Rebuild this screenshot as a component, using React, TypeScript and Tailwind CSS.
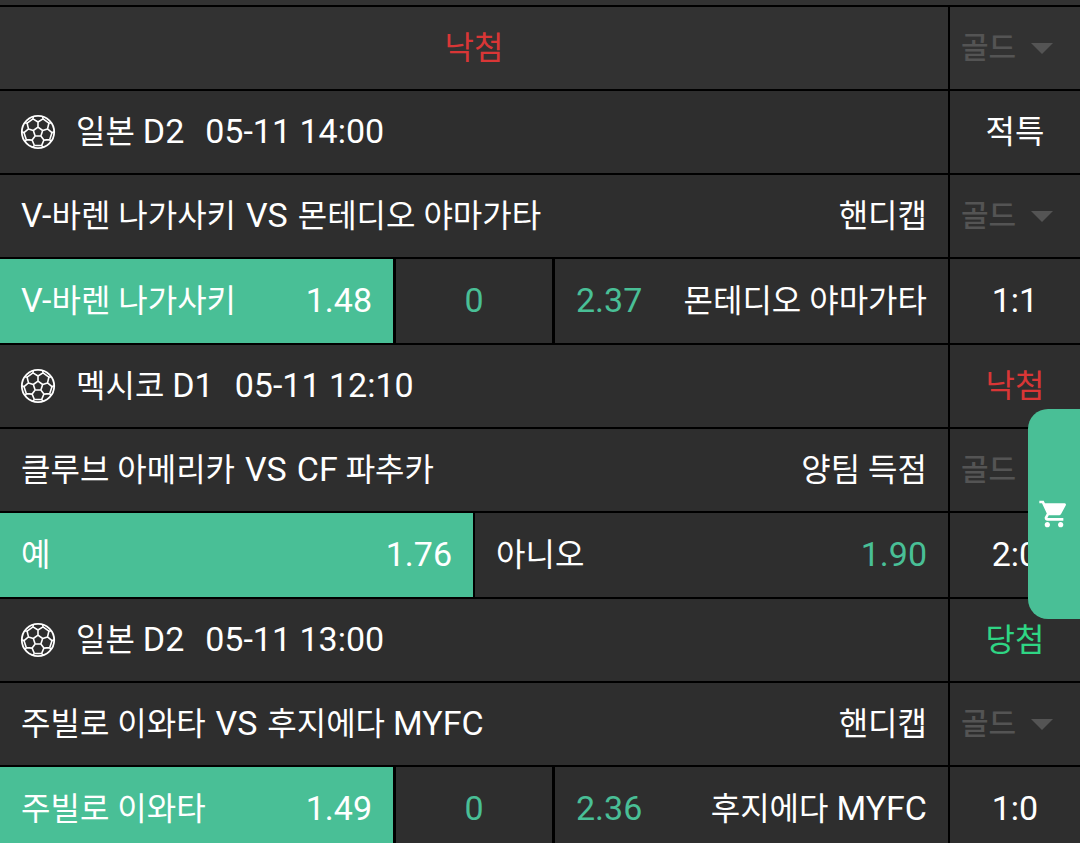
import type { ReactNode } from "react";
import { MdShoppingCart } from "react-icons/md";

type Outcome = "hit" | "miss" | "void";

interface Match {
  id: string;
  league: string;
  time: string;
  outcome: Outcome;
  home: string;
  away: string;
  market: string;
  score: string;
  kind: "handicap" | "binary";
  left: { label: string; odds: string };
  line?: string;
  right: { label: string; odds: string };
}

const matches: Match[] = [
  {
    id: "m1",
    league: "일본 D2",
    time: "05-11 14:00",
    outcome: "void",
    home: "V-바렌 나가사키",
    away: "몬테디오 야마가타",
    market: "핸디캡",
    score: "1:1",
    kind: "handicap",
    left: { label: "V-바렌 나가사키", odds: "1.48" },
    line: "0",
    right: { label: "몬테디오 야마가타", odds: "2.37" },
  },
  {
    id: "m2",
    league: "멕시코 D1",
    time: "05-11 12:10",
    outcome: "miss",
    home: "클루브 아메리카",
    away: "CF 파추카",
    market: "양팀 득점",
    score: "2:0",
    kind: "binary",
    left: { label: "예", odds: "1.76" },
    right: { label: "아니오", odds: "1.90" },
  },
  {
    id: "m3",
    league: "일본 D2",
    time: "05-11 13:00",
    outcome: "hit",
    home: "주빌로 이와타",
    away: "후지에다 MYFC",
    market: "핸디캡",
    score: "1:0",
    kind: "handicap",
    left: { label: "주빌로 이와타", odds: "1.49" },
    line: "0",
    right: { label: "후지에다 MYFC", odds: "2.36" },
  },
];

const outcomes: Record<Outcome, { text: string; color: string }> = {
  void: { text: "적특", color: "text-white" },
  miss: { text: "낙첨", color: "text-[#d93636]" },
  hit: { text: "당첨", color: "text-[#2fd584]" },
};

// Latin letters and digits run slightly larger than Hangul so both look the same height.
function Mixed({ children }: { children: string }) {
  return (
    <>
      {children.split(/([!-~]+(?: [!-~]+)*)/).map((part, i) =>
        i % 2 ? (
          <span key={i} className="text-[34px] leading-none">
            {part}
          </span>
        ) : (
          part
        ),
      )}
    </>
  );
}

// Point on the ball, angle measured clockwise from the top.
const at = (r: number, deg: number) => {
  const a = (deg * Math.PI) / 180;
  return `${(18 + r * Math.sin(a)).toFixed(2)} ${(18 - r * Math.cos(a)).toFixed(2)}`;
};

const seams = [0, 72, 144, 216, 288]
  .map(
    (d) =>
      `M${at(4.9, d)}L${at(4.9, d + 72)}M${at(4.9, d)}L${at(10, d)}` +
      `M${at(14, d - 21)}L${at(10, d)}L${at(14, d + 21)}L${at(14, d + 51)}` +
      `M${at(14, d + 21)}L${at(16.2, d + 17)}M${at(14, d - 21)}L${at(16.2, d - 17)}`,
  )
  .join("");

function SoccerBall() {
  return (
    <svg viewBox="0 0 36 36" className="size-9 shrink-0" fill="none" stroke="white" aria-hidden="true">
      <circle cx="18" cy="18" r="16.2" strokeWidth="1.8" />
      <path d={seams} strokeWidth="1.6" strokeLinejoin="round" />
    </svg>
  );
}

function Row({ tall, main, side }: { tall?: boolean; main: ReactNode; side: ReactNode }) {
  return (
    <div className={`flex gap-0.5 ${tall ? "h-[84px]" : "h-[82px]"}`}>
      <div className="flex min-w-0 flex-1">{main}</div>
      <div className="flex w-[130px] shrink-0 items-center justify-center bg-[#2e2e2e]">{side}</div>
    </div>
  );
}

function GoldSelect({ label }: { label: string }) {
  return (
    <div className="flex w-full items-center justify-between pr-[26px] pl-[11px]">
      <select
        aria-label={label}
        disabled
        className="w-15 appearance-none bg-transparent text-3xl leading-10 font-medium text-[#545454] opacity-100"
      >
        <option>골드</option>
      </select>
      <svg viewBox="0 0 24 12" className="h-3 w-6" fill="#545454" aria-hidden="true">
        <path d="M1 1h22L12 12z" />
      </svg>
    </div>
  );
}

const cell = "flex min-w-0 items-center justify-between px-[21px] whitespace-nowrap";

function Bets({ match }: { match: Match }) {
  if (match.kind === "binary") {
    return (
      <div className="grid flex-1 grid-cols-2 gap-0.5">
        <button type="button" aria-pressed="true" className={`${cell} bg-[#49bf96]`}>
          <span>{match.left.label}</span>
          <span>
            <Mixed>{match.left.odds}</Mixed>
          </span>
        </button>
        <button type="button" aria-pressed="false" className={`${cell} bg-[#2e2e2e]`}>
          <span>{match.right.label}</span>
          <span className="text-[#49bf96]">
            <Mixed>{match.right.odds}</Mixed>
          </span>
        </button>
      </div>
    );
  }
  return (
    <div className="grid flex-1 grid-cols-[1fr_156px_1fr] gap-[3px]">
      <button type="button" aria-pressed="true" className={`${cell} bg-[#49bf96]`}>
        <span>
          <Mixed>{match.left.label}</Mixed>
        </span>
        <span>
          <Mixed>{match.left.odds}</Mixed>
        </span>
      </button>
      <div className="flex items-center justify-center bg-[#2e2e2e] text-[#49bf96]">
        <span>
          <Mixed>{match.line ?? ""}</Mixed>
        </span>
      </div>
      <button type="button" aria-pressed="false" className={`${cell} bg-[#2e2e2e]`}>
        <span className="text-[#49bf96]">
          <Mixed>{match.right.odds}</Mixed>
        </span>
        <span>
          <Mixed>{match.right.label}</Mixed>
        </span>
      </button>
    </div>
  );
}

export default function App() {
  return (
    <div className="h-screen overflow-y-auto bg-black font-['Roboto','Noto_Sans_CJK_KR',sans-serif] text-[32px] leading-10 text-white [scrollbar-width:none]">
      <main className="flex flex-col gap-0.5">
        <div className="h-[5px] bg-[#323232]" />
        <div className="flex h-[82px] gap-0.5">
          <div className="flex flex-1 items-center justify-center bg-[#323232] text-[#d93636]">낙첨</div>
          <div className="flex w-[130px] shrink-0 items-center bg-[#323232]">
            <GoldSelect label="전체 골드" />
          </div>
        </div>
        {matches.map((m) => (
          <section key={m.id} className="flex flex-col gap-0.5">
            <Row
              main={
                <div className="flex flex-1 items-center bg-[#2e2e2e] px-5">
                  <SoccerBall />
                  <span className="ml-5">
                    <Mixed>{m.league}</Mixed>
                  </span>
                  <time className="ml-[21px]">
                    <Mixed>{m.time}</Mixed>
                  </time>
                </div>
              }
              side={<span className={outcomes[m.outcome].color}>{outcomes[m.outcome].text}</span>}
            />
            <Row
              main={
                <div className={`${cell} flex-1 bg-[#2e2e2e]`}>
                  <span>
                    <Mixed>{m.home}</Mixed>{" "}
                    <span className="mx-0.5">
                      <Mixed>VS</Mixed>
                    </span>{" "}
                    <Mixed>{m.away}</Mixed>
                  </span>
                  <span>{m.market}</span>
                </div>
              }
              side={<GoldSelect label={`${m.home} 골드`} />}
            />
            <Row
              tall
              main={<Bets match={m} />}
              side={
                <span>
                  <Mixed>{m.score}</Mixed>
                </span>
              }
            />
          </section>
        ))}
      </main>
      <button
        type="button"
        aria-label="장바구니"
        className="fixed top-[409px] right-0 flex h-[210px] w-13 items-center justify-center rounded-l-[20px] bg-[#49bf96]"
      >
        <MdShoppingCart className="size-8" />
      </button>
    </div>
  );
}
